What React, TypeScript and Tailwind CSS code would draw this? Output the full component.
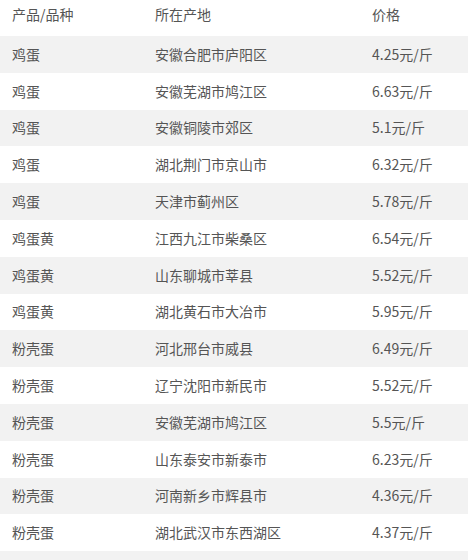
const rows: [string, string, string][] = [
  ['鸡蛋', '安徽合肥市庐阳区', '4.25元/斤'],
  ['鸡蛋', '安徽芜湖市鸠江区', '6.63元/斤'],
  ['鸡蛋', '安徽铜陵市郊区', '5.1元/斤'],
  ['鸡蛋', '湖北荆门市京山市', '6.32元/斤'],
  ['鸡蛋', '天津市蓟州区', '5.78元/斤'],
  ['鸡蛋黄', '江西九江市柴桑区', '6.54元/斤'],
  ['鸡蛋黄', '山东聊城市莘县', '5.52元/斤'],
  ['鸡蛋黄', '湖北黄石市大冶市', '5.95元/斤'],
  ['粉壳蛋', '河北邢台市威县', '6.49元/斤'],
  ['粉壳蛋', '辽宁沈阳市新民市', '5.52元/斤'],
  ['粉壳蛋', '安徽芜湖市鸠江区', '5.5元/斤'],
  ['粉壳蛋', '山东泰安市新泰市', '6.23元/斤'],
  ['粉壳蛋', '河南新乡市辉县市', '4.36元/斤'],
  ['粉壳蛋', '湖北武汉市东西湖区', '4.37元/斤'],
];

export default function App() {
  return (
    <div
      className="w-[468px] h-[560px] overflow-hidden bg-white text-[14px] text-[#555]"
      style={{ fontFamily: '"Microsoft YaHei", "Noto Sans CJK SC", sans-serif' }}
    >
      {/* header */}
      <div className="grid grid-cols-[143px_217px_1fr] h-[36px] items-center pb-[7px]">
        <div className="pl-[12px]">产品/品种</div>
        <div className="pl-[12px]">所在产地</div>
        <div className="pl-[12px]">价格</div>
      </div>
      {rows.map((r, i) => (
        <div
          key={i}
          className={`grid grid-cols-[143px_217px_1fr] h-[36.8px] items-center ${i % 2 === 0 ? 'bg-[#f2f2f2]' : 'bg-white'}`}
        >
          <div className="pl-[12px]">{r[0]}</div>
          <div className="pl-[12px]">{r[1]}</div>
          <div className="pl-[12px]">{r[2]}</div>
        </div>
      ))}
      {/* next row, only its top edge shows */}
      <div className="h-[36.8px] bg-[#f2f2f2]" />
    </div>
  );
}
